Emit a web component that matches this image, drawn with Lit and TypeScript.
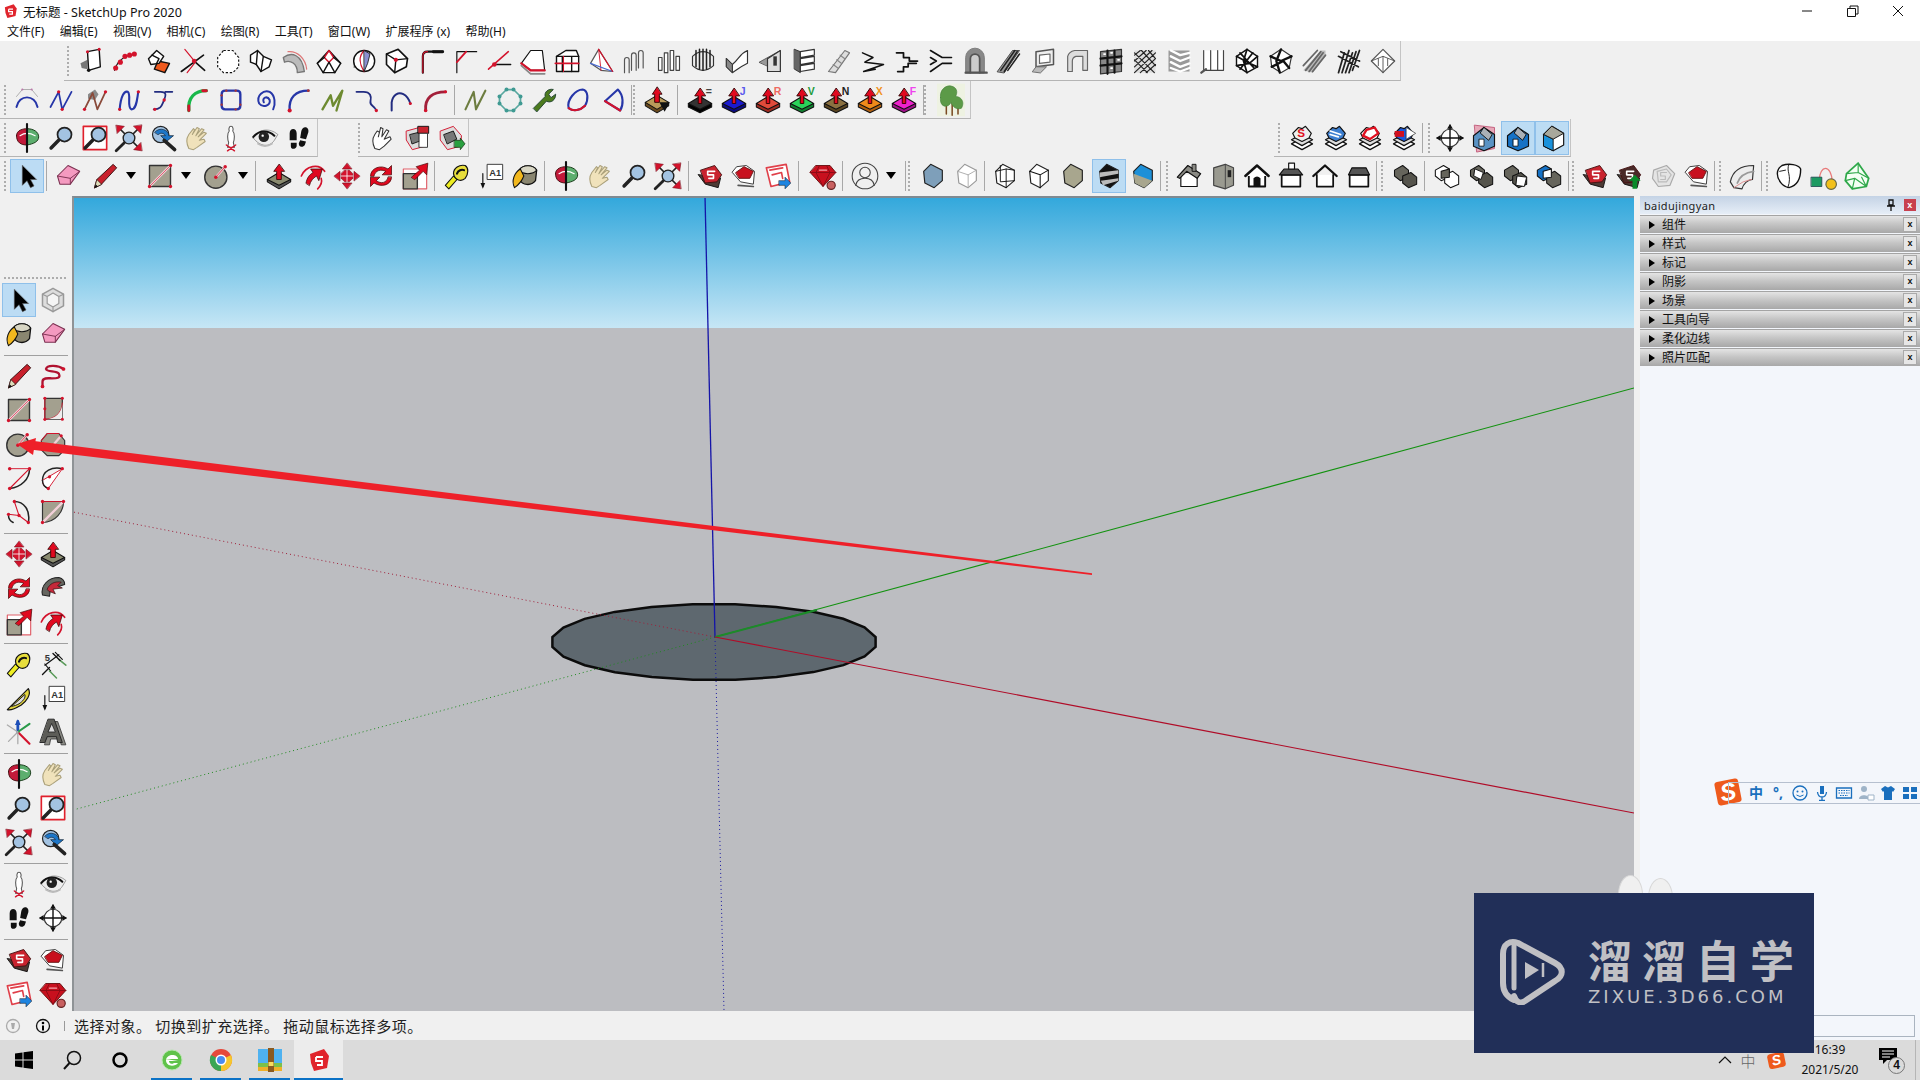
import { LitElement, html, css, svg } from 'lit';
import { customElement } from 'lit/decorators.js';

const RED = '#d3132c';
const BLUE = '#2636a8';

const p = (d: string, fill = 'none', stroke = '#111', w = 1.2) =>
  svg`<path d=${d} fill=${fill} stroke=${stroke} stroke-width=${w} stroke-linejoin="round" stroke-linecap="round"/>`;
const dots = (pts: number[][], r = 1.4, c = RED) => pts.map(([x, y]) => svg`<circle cx=${x} cy=${y} r=${r} fill=${c}/>`);
const label = (t: string, x: number, y: number, c: string, s = 8) =>
  svg`<text x=${x} y=${y} fill=${c} font-size=${s} font-weight="700" font-family="Liberation Sans, sans-serif">${t}</text>`;

// pushpull style block, optional hotkey letter
const push = (top: string, side: string, letter = '', lc = '#000') => [
  p('M2 15v3l10 5 10-5v-3', side, '#111', 0.9),
  p('M12 9 22 15 12 20 2 15z', top, '#111', 0.9),
  p('M12 2 7.5 8.5H10.500V15h3V8.500H16.500z', '#e0091f', '#300', 0.8),
  letter ? label(letter, 17, 8, lc, 9) : '',
];
const mag = (lens = '#a3c3e2') => [p('M10 14 3.500 20.500', 'none', '#222', 3), svg`<circle cx="15" cy="9" r="6" fill=${lens} stroke="#222" stroke-width="1.500"/>`];
const redTri = (d: string) => p(d, '#d3132c', '#7a0a18', 0.5);
const stack = (c: string, extra: unknown) => [
  p('M3 17 12 12 21 17 12 22z', '#fff', '#111', 1.1),
  p('M3 13.500 12 8.500 21 13.500 12 18.500z', '#ddd', '#111', 1.1),
  p('M4 8 9 3 12 4 15 2 20 8 18 12 12 15 6 12z', c, '#111', 1),
  extra,
];
const house = (body: string, roof: string, w = 1.1) => [
  p('M5 11v10h14V11', body, '#111', w),
  p('M2 12 12 3 22 12', roof, '#111', w + 0.5),
];
const houseBlue = (a: string, b: string) => [
  p('M12 3 21 9v10l-9 4-9-4v-9z', a, '#111', 1),
  p('M12 3 19 9 16 14 9 8z', '#aab0b6', '#111', 0.8),
  p('M8 13h4v6H8z', b, '#111', 0.7),
];
const hex = (fill: string, stroke = '#222') => p('M10 2 20 7 20 16 13 22 5 18 4 8z', fill, stroke, 1);
const su = (fill = '#c9232e', c = '#4d3a34') => [
  p('M2 11 8 19 19 22 21 14z', c, '#111', 0.8),
  p('M4 7 16 3 22 11 18 17 8 18z', fill, '#411', 0.8),
  p('M10 8h6M10 8v3h5v3h-4', 'none', '#fff', 1.400),
];
const gray2 = (a = '#66655c', b = '#55544c') => [
  p('M3 7 10 3 15 7 15 13 8 16 3 12z', a, '#111', 0.9),
  p('M10 12 17 9 22 13 22 19 15 22 10 18z', b, '#111', 0.9),
];
const wire2 = (mid: string, blue = false) => [
  p('M2 7 9 3 14 6 14 13 7 16 2 12z', blue ? '#1672c6' : '#fff', '#111', 0.9),
  p('M10 11 17 8 22 12 22 19 15 22 10 18z', mid, '#111', 0.9),
  p('M7 8 14 6 14 13 7 14z', blue ? '#fff' : '#66655c', '#111', 0.9),
];

const ICONS: Record<string, unknown> = {
  // row 1
  sheet: [p('M3 14 9 11v8l-5-1z', '#777', 'none'), p('M9 4 19 2 20 17 10 20z', '#fff'), dots([[9, 4], [19, 2]], 1.300), dots([[10, 20]], 1.500, '#111')],
  beads: [p('M3 20C5 13 9 10 13 8 15 7 18 7 21 6', 'none', '#222', 1), dots([[4, 18], [8, 13], [12, 8], [16, 7], [20, 6]], 2.200)],
  orange: [p('M11 12 21 14 17 22 8 19z', '#f05a1e'), p('M3 10 10 3 16 8 12 14 5 15z', '#fff'), p('M6 7 12 10 10 14')],
  snip: [p('M5 2 14 13 7 22', 'none', RED, 1), p('M2 21 21 7', 'none', '#111', 1.400), p('M14 13 22 20', 'none', '#111', 1.400), dots([[13, 12]], 2)],
  dash: [p('M4 17 9 11v10z', '#666', 'none'), svg`<path d="M9 3h8l5 6v8l-5 5H9l-5-5V9z" fill="#fff" stroke="#111" stroke-dasharray="2 1.500"/>`],
  sketch: [p('M3 7 9 3 14 8 21 11 19 17 12 21 8 15 3 13z', '#fff'), p('M9 3 8 15M14 8 12 21')],
  band: [p('M2 9C9 4 18 6 20 21L14 22C14 14 8 11 3 13z', '#bbb', '#777'), p('M6 4C14 3 21 10 22 19', 'none', '#d77', 1)],
  hip: [p('M12 3 22 14 17 22H7L2 14z', '#fff'), p('M8 9 12 3 16 9 12 13z', 'none', RED), p('M2 14 8 9M22 14 16 9M7 22 12 13 17 22')],
  ball: [p('M4 9 9 6v10l-5 2z', '#666', 'none'), svg`<circle cx="13" cy="12" r="9" fill="#fff" stroke="#111" stroke-width="1.200"/>`, p('M13 3C8 8 9 15 13 21', 'none', RED), p('M13 3 18 6 16 14 13 21z', '#8a8fd0', '#111', 0.7)],
  boxarrow: [p('M3 6 13 2 21 10 20 17 10 22 3 15z', '#fff', '#111', 1.400), p('M3 6 11 11 10 22M11 11 21 10'), dots([[11, 11]], 1.800)],
  cornerA: [p('M5 22V8Q5 4 9 4H22', 'none', '#111', 1.800), p('M5 22V8Q5 4 9 4', 'none', RED, 1), p('M14 4H22', 'none', '#111', 2.500)],
  cornerB: [p('M5 22V4H22', 'none', '#111', 1), p('M5 13 13 4', 'none', RED, 1.600)],
  angle: [p('M3 19 20 4', 'none', RED, 1.300), p('M8 15H22', 'none', '#111', 1.200), dots([[8, 15]], 2)],
  hexred: [p('M2 14 10 3 20 3 22 20 10 20z', '#fff', '#111', 1), p('M2 14 10 20H22', 'none', RED, 2), p('M2 16 10 23H22', 'none', '#888', 1.500)],
  frameR: [p('M3 8 11 3H20L22 8V21H3z', '#fff'), p('M3 8H22M8 8V21M16 8V21'), p('M2 14H22', 'none', RED, 1.500), p('M9 8V21', 'none', RED, 0.9)],
  prism: [p('M10 2 22 21 12 20 3 14z', '#fff', '#555', 1), p('M10 2 12 20', 'none', RED, 0.8), p('M3 14 22 21', 'none', '#4a6ad0', 1), p('M10 2 22 21', 'none', RED, 1)],
  pillars: [p('M3 22V11Q3 9 5 9T7 11V22M9 20V7Q9 5 11 5T13 7V20M15 18V5Q15 3 17 3T19 5V18', 'none', '#555', 1)],
  pillars2: [p('M3 20V9H6V20ZM8 22V5H11V22ZM13 20V3H16V20ZM18 20V8H21V20Z', '#fff', '#444', 1)],
  ribs: [p('M3 8Q12 0 21 8V16Q12 24 3 16z', '#eee', '#333', 1), p('M6 3V17M9 2V19M12 2V20M15 2V19M18 3V17', 'none', '#222', 1.300)],
  fold: [p('M3 10 8 15V22L3 17zM8 15C14 10 14 6 21 3V14C15 17 14 18 8 22z', '#fff', '#333', 1), p('M3 17 8 22V15L3 10z', '#888', '#333', 0.8)],
  wedge: [p('M2 13 20 3V21z', '#999', '#555', 0.8), p('M9 10 20 3V21H9z', '#ddd', '#333', 1), p('M14 8h3v8h-3z', '#333', 'none')],
  louvers: [p('M3 2 8 4V22L3 19z', '#666', '#333', 0.8), p('M8 4 20 2V7L8 9zM8 10 20 8V13L8 15zM8 16 20 14V19L8 21z', '#fff', '#333', 1)],
  ramp: [p('M3 21 17 3 21 5 9 22z', '#ddd', '#777', 1), p('M7 15 11 18M10 11 14 14M13 7 17 10', 'none', '#888', 1)],
  zig1: [p('M3 5 12 9 5 13 21 15 4 21 14 19', 'none', '#111', 1.300)],
  zig2: [p('M3 5H9V9H14V12H21M4 21H9V17H13V14H20', 'none', '#111', 1.500)],
  zig3: [p('M3 3 13 9H21M3 21 13 14H21M3 9 8 12 3 15', 'none', '#111', 1.400)],
  dome: [p('M4 22V9A8 8 0 0 1 20 9V22z', '#888', '#777', 0.8), p('M8 22V10A4 4 0 0 1 16 10V22', '#ccc', '#555', 1.500), p('M4 22H22', 'none', '#555', 2)],
  slash: [p('M2 21 15 3H21L8 22z', '#999', '#333', 0.7), p('M5 20 17 3M8 21 19 4M11 20 21 6', 'none', '#222', 1.300)],
  frame3: [p('M6 4 21 2V15L6 17z', '#eee', '#555', 1.300), p('M9 7 18 6V13L9 14z', '#fff', '#666', 1), p('M3 21 6 17H15L10 22z', '#bbb', '#666', 0.8)],
  arch: [p('M4 21V8Q5 4 10 3H21V20H17V8H11Q8 9 8 12V21z', '#ddd', '#666', 1)],
  grid: [p('M3 4 21 2V21L3 23z', '#888', '#333', 1), p('M9 3V23M15 3V22M3 10 21 8M3 16 21 14', 'none', '#111', 1.800), p('M6 6h1M12 5h1M18 11h1M12 18h1', 'none', '#fff', 1.500)],
  hatch: [p('M3 3H21V22H3z', '#ddd', 'none'), p('M3 7 8 3M3 12 13 3M3 17 18 3M3 22 21 5M8 22 21 10M13 22 21 15M3 5 20 22M3 11 14 22M9 3 21 16M15 3 21 10', 'none', '#222', 1)],
  chev: [p('M3 3H21V21H3z', '#999', 'none'), p('M5 3 13 7 21 5M5 8 13 12 21 9M5 13 13 17 21 14M5 18 13 21 21 18', 'none', '#fff', 2)],
  curtain: [p('M4 3V20H10V3M10 3V20H16V3M16 3V20H21V3', '#fff', '#444', 1), p('M2 22 6 19', 'none', '#555', 2)],
  swirl: [p('M12 2 21 8 21 17 12 22 3 16 3 8z', '#fff', '#111', 1.200), p('M3 8 14 14 21 8M12 2 9 12 12 22M3 16 14 14 21 17M6 5 18 18M17 5 6 19', 'none', '#111', 1.500)],
  swirl2: [p('M12 2 21 8 19 18 12 22 4 17 3 8z', '#fff', '#333', 1), p('M3 8 12 12 21 8M12 2 8 12 11 22M4 17 14 12 19 18', 'none', '#111', 2)],
  diag: [p('M2 20 17 3H21V8L10 22z', '#bbb', 'none'), p('M4 20 17 4M7 21 19 5M10 21 21 7M2 16 14 3', 'none', '#666', 1.500)],
  stripes: [p('M3 22 8 5M6 22 12 3M9 22 15 5M12 22 18 4M15 20 21 3M3 8 20 17M5 4 21 12', 'none', '#222', 1.500)],
  gemw: [p('M12 2 22 12 12 22 2 12z', '#fff', '#555', 1), p('M2 12 12 8 22 12M12 8V22M8 16V10M16 16V10', 'none', '#555', 0.8)],
  // row 2
  bez: [p('M3 9 8 3H16L21 9', 'none', '#aaa', 0.8), p('M3 18C5 7 19 7 21 18', 'none', BLUE, 1.700), dots([[8, 3], [16, 3]], 0.900, '#b7a')],
  zigB: [p('M3 18 10 5 13 20 21 5', 'none', BLUE, 1.500), dots([[13, 20], [10, 5]])],
  zigG: [p('M6 7 12 3 15 7 12 12 6 11z', '#8a8a8a', 'none'), p('M3 20 10 6 14 20 21 5', 'none', '#8a4a3a', 1.500), dots([[3, 20], [21, 5]])],
  nBlue: [p('M4 20C5 8 8 4 11 5 14 7 10 18 14 20 19 20 19 9 20 5', 'none', BLUE, 1.800), dots([[4, 20], [20, 5]])],
  sBlue: [p('M5 5H10C16 5 14 9 13 12 11 16 11 20 4 20M14 5H20M3 22', 'none', '#222c80', 1.500), dots([[5, 20], [13, 12]])],
  arcG: [p('M5 21C4 10 10 4 20 4', 'none', '#18b84a', 2.800), p('M5 21V17M20 4H17', 'none', RED, 2.500)],
  rrect: [p('M7 4H17Q20 4 20 7V17Q20 20 17 20H7Q4 20 4 17V7Q4 4 7 4z', 'none', BLUE, 2), dots([[4, 8], [8, 4], [20, 16], [16, 20], [4, 16], [16, 4]], 1, '#a33')],
  spiral: [p('M11 14C9 10 14 8 16 12 17 17 10 19 7 15 4 8 11 3 16 5 21 8 21 16 19 20', 'none', BLUE, 1.700)],
  arcB: [p('M4 21C3 10 9 4 20 4', 'none', BLUE, 2), dots([[4, 21]], 1.800), dots([[20, 4]], 1.200, '#a33')],
  zigO: [p('M3 20 10 8 12 17 20 4 15 21', 'none', '#6d8a30', 2)],
  step: [p('M3 5H9C15 5 16 9 15 13 14 17 18 16 20 21', 'none', '#222c80', 1.600), dots([[20, 21]], 1.400)],
  archN: [p('M4 21V14C5 7 10 5 14 7 18 9 19 12 20 15', 'none', '#222c80', 1.700), dots([[20, 15]], 1.300)],
  archR: [p('M4 21C3 10 10 5 21 5', 'none', '#a3203a', 2.400), dots([[4, 21]], 1.500), dots([[21, 5]], 1.300)],
  zigOl: [p('M3 20 10 5 12 20 20 4', 'none', '#6d7d40', 1.800)],
  octo: [p('M9 3H15L21 9V15L15 21H9L3 15V9z', 'none', '#5aa8a0', 1.500), dots([[9, 3], [15, 3], [21, 9], [21, 15], [15, 21], [9, 21], [3, 15], [3, 9]], 1.700, '#3f9a92')],
  wrench: [p('M3 19 13 9C12 5 16 2 20 3L16 7 18 10 22 7C22 12 18 15 14 13L6 22z', '#4c7a1e', '#243', 0.8)],
  blob: [p('M4 19C2 12 10 3 16 3 21 4 21 12 18 17 14 21 8 22 4 19z', 'none', BLUE, 1.800), p('M4 19C8 22 14 21 18 17', 'none', RED, 1.800)],
  dtri: [p('M6 13 17 3C22 8 22 16 19 21z', 'none', BLUE, 1.800), p('M6 13 19 21', 'none', RED, 1.800)],
  pushW: [p('M2 14v3l10 6 10-6v-3', '#6a4a1e', '#111', 0.9), p('M12 8 22 14 12 20 2 14z', '#b99a5a', '#111', 0.9), p('M12 1 8 7H10V14H14V7H16z', '#e0091f', '#300', 0.8), p('M14 14H23L18.500 22z', '#111', 'none')],
  pushK: push('#333', '#000', '=', '#444'),
  pushJ: push('#1a1ad0', '#0a0a80', 'J', '#5a5aee'),
  pushR: push('#e04a3a', '#a02a20', 'R', '#ee6a60'),
  pushV: push('#2ad45a', '#108030', 'V', '#1c9a3c'),
  pushN: push('#8a7040', '#5a4520', 'N', '#222'),
  pushX: push('#f08a1a', '#b06010', 'X', '#f09020'),
  pushF: push('#ee22cc', '#a0108a', 'F', '#ee44ee'),
  tree: [p('M0 -2H24V26H0z', '#eef2e2', 'none'), p('M8 24V12M13 25V13M18 24V14', 'none', '#7a4a22', 1.300), p('M3 10C2 3 8 -1 12 0 17 1 18 5 16 9 21 9 24 14 21 19 16 21 13 17 12 14 10 19 2 19 3 10z', '#5c9a48', '#3f7d35', 0.5)],
  // row 3 and navigation
  orbit: [p('M3 10C3 5 9 4 12 4V18C7 18 3 16 3 10z', '#c21a3a', '#411', 0.8), p('M12 4C18 4 22 7 22 11 22 15 18 17 12 18z', '#5cae6e', '#131', 0.8), p('M6 10Q12 6 19 10', 'none', '#fff', 1), p('M12 0V24', 'none', '#111', 1.800)],
  zoom: mag(),
  zoomw: [p('M2 2H22V22H2z', '#fff', '#e0202c', 1.400), mag()],
  extents: [p('M3 21 9 15M15 15 21 21M9 9 3 3M15 9 21 3', 'none', '#222', 1.500), svg`<circle cx="12" cy="12" r="5" fill="#a3c3e2" stroke="#222" stroke-width="1.200"/>`, redTri('M1 1 8 2 2 8zM23 1 22 8 16 2zM23 23 16 22 22 16z'), p('M1 23 8 16', 'none', '#222', 2.400)],
  prev: [svg`<circle cx="10" cy="9" r="7" fill="#a3c3e2" stroke="#222"/>`, p('M5 7C9 2 17 5 17 10H21L15 15 10 10H14C13 8 10 7 8 9z', '#1d76c8', '#123', 0.6), p('M13 14 22 22', 'none', '#222', 3)],
  hand: [p('M5 21C2 15 3 12 5 9L9 4 10 5 8 9 12 3 14 4 11 10 16 4 18 5 13 11 18 7 20 8 14 14 18 13 19 15 12 20 9 22z', '#f0e2bb', '#aaa07a', 0.9)],
  walk: [p('M12 2C10 2 10 5 10.500 6 8.500 8 9 13 10 16L9 20H15L14 16C15 13 15.500 8 13.500 6 14 5 14 2 12 2z', '#fff', '#555', 0.9), p('M8 18 15 23M16 18 9 23', 'none', RED, 1.200)],
  eye: [p('M2 12C6 4 16 3 23 9L20 14C16 20 8 20 2 12z', '#eee', '#777', 0.6), p('M2 11C7 5 15 5 20 10', 'none', '#111', 1.800), svg`<circle cx="11" cy="11" r="4.500" fill="#222"/>`, dots([[10, 10]], 1, '#fff'), p('M6 17Q12 21 18 17', 'none', '#bbb', 1.500)],
  steps: [p('M4 8C4 3 10 3 10 8L10 14H4zM5 16H10V19C9 22 5 22 5 19z', '#111', 'none'), p('M14 6C15 1 21 2 20 7L18 13 13 12zM13 14 18 15 17 18C15 21 11 19 12 16z', '#111', 'none')],
  handO: [p('M5 21C2 15 3 12 5 9L7 6 9 7 8 11 10 3 12 4 11 11 15 5 17 6 13 13 18 11 19 13 13 19 9 22z', '#fff', '#333', 0.9)],
  sectA: [p('M3 6 14 3 20 12 19 19 8 22 3 14z', '#ddd', RED, 0.8), p('M6 9 14 7 16 14 8 17z', '#777', '#111', 0.8), p('M13 2H22V8H13z', '#c9232e', '#111', 0.8), p('M14 8H21V20H14z', '#fff', '#333', 0.8)],
  sectB: [p('M3 6 14 2 21 10 20 19 9 22 3 14z', '#ddd', RED, 0.8), p('M6 9 14 6 17 13 9 17z', '#777', '#111', 0.8), p('M15 14H20V12L24 17 20 22V20H15z', '#2aa040', '#131', 0.6)],
  stackS: stack('#eee', label('S', 8, 11, '#e01020', 10)),
  stackB: stack('#3d7fd0', p('M7 6 16 9M7 9 14 11', 'none', '#fff', 1.500)),
  stackR: stack('#fff', p('M9 5 16 3 19 8 12 13 6 10z', 'none', '#e01020', 2)),
  stackG: stack('#1a5ae0', [p('M4 6H12V11H4z', '#d01020', 'none'), p('M14 3 22 8 14 13z', '#fff', '#333', 0.6)]),
  target: [svg`<circle cx="12" cy="12" r="7.500" fill="#fff" stroke="#333"/>`, p('M1 12H23M12 1V23', 'none', '#111', 1.200), p('M12 0 9.500 4H14.500zM24 12 20 9.500V14.500zM0 12 4 9.500V14.500zM12 24 9.500 20H14.500z', '#111', 'none')],
  housePlane: [p('M4 1 21 3V21L6 24z', '#e7a8b8', '#c25a7a', 0.8), houseBlue('#5a93c4', '#fff')],
  houseA: houseBlue('#1672c6', '#fff'),
  houseB: [p('M12 2 22 8V18L13 23 5 19V9z', '#fff', '#111', 1), p('M5 9 13 13V23L5 19z', '#1a92dc', '#111', 0.8), p('M12 2 22 8 13 13 5 9z', '#a8a89c', '#111', 0.8)],
  // row 4
  select: [p('M8 3V20L12 16 15 22 18 20.500 15 15H20z', '#000', '#555', 0.5)],
  eraser: [p('M3 12 12 3 22 8 14 19 5 19z', '#f49ac0', '#7a3050', 0.9), p('M3 12 14 14 22 8M14 14V19', 'none', '#7a3050', 0.8)],
  pencil: [p('M3 22 5 15 19 2 22 5 9 19z', '#c8202c', '#311', 0.8), p('M3 22 5 15 9 19z', '#ddb', '#311', 0.6), p('M3 22 4 19 6 21z', '#111', 'none')],
  rect: [p('M3 3H21V21H3z', '#a3a08f', '#333', 1.200), p('M4 20 20 4', 'none', '#f2d0d8', 2), p('M4 20 20 4', 'none', RED, 0.5), dots([[3, 21], [21, 3], [21, 21]], 1.400)],
  arcRect: [p('M3 3C20 3 21 10 21 21L3 21z', '#a3a08f', '#333', 1), p('M4 20 20 4', 'none', '#f2d0d8', 2), dots([[3, 3], [21, 21], [3, 21]], 1.400)],
  rotRect: [p('M5 2H20V20H5z', '#a3a08f', '#333', 1), p('M5 2 5 21M5 20C14 20 20 14 20 6', 'none', RED, 0.8), p('M5 20C14 20 20 14 20 6L20 20z', '#eee', 'none'), dots([[5, 2], [20, 2], [20, 20], [5, 20], [5, 11]], 1.300)],
  circle: [svg`<circle cx="11" cy="13" r="9.500" fill="#a3a08f" stroke="#333" stroke-width="1.200"/>`, p('M11 13 19 4', 'none', '#f2d0d8', 2), p('M11 13 19 4', 'none', RED, 0.6), dots([[11, 13], [19, 4]], 1.500)],
  poly: [p('M7 3H17L22 9V17L17 22H7L2 17V9z', '#a3a08f', '#333', 1), p('M2 9 7 3H17', 'none', RED, 0.9), p('M12 13 19 5', 'none', '#f2d0d8', 2), dots([[12, 13], [19, 5]], 1.400)],
  arc1: [p('M4 4H21', 'none', RED, 0.8), p('M21 4C21 13 14 20 4 21', 'none', '#222', 1.300), p('M4 21 21 4', 'none', RED, 1), dots([[4, 4], [21, 4], [4, 21]], 1.500)],
  arc2: [p('M3 14C3 6 11 2 20 4', 'none', '#222', 1.200), p('M3 14 20 4 8 21C4 20 3 17 3 14z', '#fff', RED, 0.8), p('M3 14C3 18 5 20 8 21', 'none', '#222', 1.200), dots([[20, 4], [8, 21], [9, 11]], 1.400)],
  arc3: [p('M8 3C16 3 22 10 20 21', 'none', '#222', 1.300), p('M3 15C3 18 5 20 7 21', 'none', '#222', 1.300), p('M8 3 12 15 20 21M3 14 12 15', 'none', RED, 0.9), dots([[8, 3], [3, 14], [12, 15], [20, 21]], 1.400)],
  pie: [p('M3 3H21C21 12 14 21 3 21z', '#a3a08f', '#333', 1), p('M4 20 20 4', 'none', '#f2d0d8', 2), p('M3 3H21', 'none', RED, 0.8), dots([[3, 3], [21, 3], [3, 21]], 1.400)],
  freehand: [p('M3 21V17C3 13 9 14 11 14 15 14 19 14 17 10 15 7 7 9 6 6 7 2 17 3 21 6', 'none', '#b01230', 2), dots([[3, 21], [21, 6]], 1.600)],
  pushpull: [p('M2 15v2l10 6 10-6v-2', '#555', '#111', 0.9), p('M12 9 22 15 12 20 2 15z', '#8a8b70', '#111', 0.9), p('M12 2 7.500 8H10V15H14V8H16.500z', '#e0091f', '#300', 0.7)],
  follow: [p('M2 12C6 3 17 1 22 8', 'none', RED, 1.400), p('M19 14C20 17 19 20 16 23', 'none', RED, 1.400), p('M6 18C7 13 9 11 12 9L10 6H20L17 16 15 12C12 14 10 16 9 20z', '#e0091f', '#300', 0.6)],
  move: [redTri('M12 1 8 6H16zM12 23 8 18H16zM1 12 6 8V16zM23 12 18 8V16z'), redTri('M10 7 14 7 17 10 17 14 14 17 10 17 7 14 7 10z'), p('M12 7V17M7 12H17', 'none', '#fff', 0.7)],
  rotate: [p('M3 12C3 5 12 2 18 6L21 3V11H13L16 8C12 6 7 7 6 12z', '#e0091f', '#400', 0.6), p('M21 13C21 20 12 22 6 18L3 21V13H11L8 16C12 19 17 18 18 13z', '#e0091f', '#400', 0.6)],
  scale: [p('M2 6H22V23H2z', '#fff', '#e0606a', 1), p('M2 10H14V23H2z', '#a3a08f', '#333', 1.200), p('M9 13 16 7 13 4 23 1 22 11 19 8 12 15z', '#e0091f', '#400', 0.6)],
  offset: [p('M3 18C1 10 8 3 17 3 21 4 22 7 22 9L16 11C11 11 9 14 9 19z', '#666660', '#222', 0.9), p('M7 13C9 8 14 6 19 7L16 10 20 12 12 13 14 17 9 15z', '#c4283a', '#311', 0.6)],
  tape: [p('M2 20 9 12 12 15 5 23z', '#ee2', '#111', 0.9), p('M9 10C9 5 14 2 19 3 22 5 22 10 19 14 16 17 10 16 9 10z', '#e8de3c', '#111', 1), p('M12 10C13 7 16 6 18 7', 'none', '#111', 1.800)],
  dim: [p('M5 13 17 4M5 12 10 18M14 2 20 8', 'none', '#111', 1), p('M17 8 23 13M9 18 15 24', 'none', '#5a9a5a', 1.300), p('M3 21 9 15M12 3 18 9', 'none', '#111', 1.200), label('5', 5, 9, '#333', 8)],
  prot: [p('M2 22 20 4C23 9 18 15 14 18 9 21 5 23 2 22z', '#e4d640', '#111', 1), p('M6 19 17 9C18 12 15 15 12 17 10 18 8 19 6 19z', '#ddd', '#111', 0.8)],
  textA: [p('M9 2H22V15H9z', '#fff', '#333', 0.8), label('A1', 10.500, 12, '#333', 8), p('M5 10V21', 'none', '#111', 1), p('M3 18H7L5 23z', '#111', 'none')],
  axes: [p('M11 12V3', 'none', '#1d4fb8', 2.400), p('M11 1 8.500 6H13.500z', '#1d4fb8', 'none'), p('M11 12 21 22', 'none', '#d3132c', 1.800), p('M11 12 21 5', 'none', '#2a9a4a', 1.800), p('M11 12 2 6M11 12 3 20M11 12V22', 'none', '#aaa', 1.100)],
  text3d: [p('M12 3H16L23 23H19L18 18H10L9 23H5z', '#8a8a84', '#333', 0.7), p('M8 1H13L20 21H16L15 16H7L5 21H1z', '#5d5d58', '#222', 0.8), p('M8 12H14L11 5z', '#ddd', '#222', 0.7)],
  paint: [p('M7 7C10 2 19 2 22 7L21 16C17 21 10 20 7 15z', '#8a8670', '#111', 1.100), p('M7 7C10 2 19 2 22 7 19 11 10 11 7 7z', '#d8d6c4', '#111', 0.9), p('M8 6C3 9 0 16 3 22 6 20 9 17 11 12z', '#f2b81e', '#111', 0.9)],
  component: [p('M3 7 12 2 21 7V17L12 22 3 17z', '#ddd', '#999', 1.300), p('M7 9 12 6 17 9V15L12 18 7 15zM3 7 7 9M21 7 17 9M12 22V18', '#f5f5f5', '#999', 1)],
  ruby: [p('M6 3H18L23 9 12 21 1 9z', '#c8101e', '#611', 0.8), p('M1 9H23M9 3 6 9 12 21 18 9 15 3', 'none', '#8a0c16', 0.8), p('M9 7H15', 'none', '#f4a0a8', 1.200), svg`<circle cx="19" cy="20" r="3.500" fill="#c86060" stroke="#622"/>`],
  su1: su(),
  su2: [p('M2 9 9 17 20 19 21 8 14 3 6 4z', '#fff', '#333', 0.8), p('M5 9 12 4 20 8 17 14 8 14z', '#c8101e', '#611', 0.8), p('M7 20 20 21', 'none', '#555', 1.500)],
  su3: [p('M2 5 19 2 22 17 6 21z', '#fff', '#e0404a', 1.400), p('M5 7 16 5M7 11 15 9 16 14', 'none', '#e0404a', 1.400), p('M13 16H18V13L23 18 18 23V20H13z', '#1d84e0', '#123', 0.5)],
  suUp: [su('#4a2a28'), p('M15 16H12L17 11 22 16H19V23H15z', '#0a8a2a', 'none')],
  suGray: [p('M4 7 15 3 22 10 18 20 8 21 3 14z', '#e4e4e4', '#aaa', 1), p('M7 8 15 6 19 11 15 17 8 17zM10 9H15M10 9V12H14V15H10', 'none', '#bbb', 1)],
  user: [svg`<circle cx="12" cy="12" r="11" fill="none" stroke="#444" stroke-width=".9"/><circle cx="12" cy="9" r="4.500" fill="none" stroke="#444" stroke-width=".9"/>`, p('M4 20C5 15 8 14 12 14S19 15 20 20', 'none', '#444', 0.9)],
  xray: hex('#7e9fba'),
  wire: [hex('#fff', '#999'), p('M4 8 13 11 13 22M13 11 20 7', 'none', '#aaa', 0.8)],
  wire3: [hex('#fff'), p('M4 8 13 6 20 7M13 6 13 22M8 3 8 17 20 16', 'none', '#111', 0.8)],
  line: [hex('#fff'), p('M4 8 13 11 13 22M13 11 20 7', 'none', '#111', 0.9)],
  shaded: hex('#a8a68e'),
  mono: [hex('#111'), p('M4 9 20 7V10L4 13zM5 16 20 14V16L7 20z', '#bbb', 'none')],
  tex: [hex('#1d90d8'), p('M4 10 20 16 13 22 5 18z', '#a8a68e', 'none')],
  h1: [p('M5 11V21H19V11', '#fff', '#111', 1), p('M2 13 11 3 22 10 19 14 10 8 4 14z', '#8a8a84', '#111', 1), p('M15 2H18V8H15z', '#8a8a84', '#111', 0.8)],
  h2: [p('M4 5 14 2 21 5V20L14 23 4 20z', '#9a9a90', '#444', 1), p('M14 2V23', 'none', '#444', 0.8), p('M16 7H19V13H16z', '#222', 'none')],
  h3: [house('#fff', '#fff', 1.600), p('M9 21V14Q12 11 15 14V21z', '#111', 'none')],
  h4: [p('M4 11H20V21H4z', '#fff', '#111', 1.500), p('M2 11 6 6H18L22 11z', '#555', '#111', 1), p('M10 1H15V6H10z', '#fff', '#111', 1)],
  h5: house('#fff', 'none', 1.500),
  h6: [p('M4 11H20V21H4z', '#fff', '#111', 1.500), p('M3 11 6 5H18L21 11z', '#555', '#111', 1)],
  g1: gray2(),
  w1: wire2('#fff'),
  w2: [gray2(), p('M7 6 14 9 12 15 6 12z', '#fff', '#111', 0.8)],
  w3: [gray2(), p('M14 12 22 13 20 21 13 20z', '#fff', '#111', 0.8)],
  w4: wire2('#66655c', true),
  loft: [p('M2 17C4 7 12 3 22 3L21 15C17 15 13 19 12 23L5 22z', '#ececec', '#333', 1), p('M8 18C10 12 15 9 22 8', 'none', '#999', 1.500), p('M5 22 13 17 20 15', 'none', '#e08a8a', 0.8)],
  rock: [p('M6 3C12 1 20 2 22 6 22 13 20 20 12 22 6 21 2 15 2 10 2 7 3 5 6 3z', '#fff', '#111', 1.200), p('M12 2C9 8 15 11 11 22M4 8 9 7', 'none', '#111', 0.8)],
  nodes: [p('M9 15C9 3 19 1 20 17', 'none', '#e87a7a', 1), p('M2 13H11V21H2z', '#1d9a62', '#134', 0.6), svg`<circle cx="19" cy="19" r="4.500" fill="#f2c01a" stroke="#664"/>`],
  gemG: [p('M13 1 22 14 20 21 8 23 2 16 3 10z', '#f4fff4', '#2fa84a', 1.500), p('M3 10 13 9 13 1M13 9 22 14M2 16 10 14 8 23M10 14 20 21 16 13', 'none', '#2fa84a', 1)],
};

const ROW1: unknown[] = [3, ':', 5, 'sheet', 'beads', 'orange', 'snip', 'dash', 'sketch', 'band', 'hip', 'ball', 'boxarrow', 'cornerA', 'cornerB', 'angle', 'hexred', 'frameR', 'prism', 'pillars', 'pillars2', 'ribs', 'fold', 'wedge', 'louvers', 'ramp', 'zig1', 'zig2', 'zig3', 'dome', 'slash', 'frame3', 'arch', 'grid', 'hatch', 'chev', 'curtain', 'swirl', 'swirl2', 'diag', 'stripes', 'gemw'];
const ROW2: unknown[] = [4, ':', 4, 'bez', 'zigB', 'zigG', 'nBlue', 'sBlue', 'arcG', 'rrect', 'spiral', 'arcB', 'zigO', 'step', 'archN', 'archR', 2, '|', 4, 'zigOl', 'octo', 'wrench', 'blob', 'dtri', 2, '|', 1, ':', 5, 'pushW', 3, '|', 5, 'pushK', 'pushJ', 'pushR', 'pushV', 'pushN', 'pushX', 'pushF', 2, '|', 0, ':', 8, 'tree', 2];
const ROW3A: unknown[] = [4, ':', 4, 'orbit', 'zoom', 'zoomw', 'extents', 'prev', 'hand', 'walk', 'eye', 'steps', 1];
const ROW3B: unknown[] = [':', 6, 'handO', 'sectA', 'sectB'];
const ROW3C: unknown[] = [4, ':', 5, 'stackS', 'stackB', 'stackR', 'stackG', 1, '|', 5, ':', 3, 'target', 'housePlane', '*houseA', '*houseB', 1];
const ROW4: unknown[] = [4, ':', 4, '*select', 2, '|', 4, 'eraser', 3, 'pencil', 'v', 1, 2, 'rect', 'v', 2, 3, 'circle', 'v', 3, '|', 6, 'pushpull', 'follow', 'move', 'rotate', 'scale', 2, '|', 5, 'tape', 'textA', 'paint', 2, '|', 4, 'orbit', 'hand', 'zoom', 'extents', 3, '|', 4, 'su1', 'su2', 'su3', 3, '|', 7, 'ruby', 2, '|', 5, 'user', 'v', 5, '|', 2, ':', 6, 'xray', 'wire', '|', 3, 'wire3', 'line', 'shaded', 2, '*mono', 'tex', '|', 5, ':', 4, 'h1', 'h2', 'h3', 'h4', 'h5', 'h6', '|', 4, ':', 5, 'g1', 2, '|', 5, 'w1', 'w2', 'w3', 'w4', 2, '|', 3, ':', 4, 'su1', 'suUp', 'suGray', 'su2', '|', 4, ':', 4, 'loft', 2, '|', 4, ':', 4, 'rock', 'nodes', 'gemG'];

const LEFT: string[][] = [
  ['*select', 'component', 'paint', 'eraser'],
  ['pencil', 'freehand', 'rect', 'rotRect', 'circle', 'poly', 'arc1', 'arc2', 'arc3', 'pie'],
  ['move', 'pushpull', 'rotate', 'offset', 'scale', 'follow'],
  ['tape', 'dim', 'prot', 'textA', 'axes', 'text3d'],
  ['orbit', 'hand', 'zoom', 'zoomw', 'extents', 'prev'],
  ['walk', 'eye', 'steps', 'target'],
  ['su1', 'su2', 'su3', 'ruby'],
];

const MENUS = ['文件(F)', '编辑(E)', '视图(V)', '相机(C)', '绘图(R)', '工具(T)', '窗口(W)', '扩展程序 (x)', '帮助(H)'];
const TRAYS = ['组件', '样式', '标记', '阴影', '场景', '工具向导', '柔化边线', '照片匹配'];

// 24 sided disc, the circle the user just drew
const DISC = Array.from({ length: 24 }, (_, i) => {
  const a = (i / 24) * Math.PI * 2 + 0.13;
  return `${(714 + 163 * Math.cos(a)).toFixed(1)},${(642 + 38 * Math.sin(a)).toFixed(1)}`;
}).join(' ');

@customElement('app-root')
export class AppRoot extends LitElement {
  static styles = css`
    :host {
      display: block;
      position: relative;
      width: 1920px;
      height: 1080px;
      overflow: hidden;
      background: #f0f0f0;
      font-family: 'Noto Sans', 'Noto Sans CJK SC', sans-serif;
      font-size: 12px;
      color: #111;
    }
    .title {
      height: 22px;
      background: #fff;
      display: flex;
      align-items: center;
      padding-left: 3px;
      gap: 5px;
      font-size: 12.5px;
    }
    .title .logo {
      width: 15px;
      height: 16px;
    }
    .winbtns {
      margin-left: auto;
      display: flex;
    }
    .winbtns svg {
      width: 45px;
      height: 20px;
    }
    .menu {
      height: 19px;
      background: #fff;
      display: flex;
      gap: 15.3px;
      padding-left: 7px;
      align-items: center;
      line-height: 19px;
    }
    .row {
      display: flex;
      height: 38px;
    }
    .row.first {
      height: 40px;
      padding-left: 64px;
    }
    .row.last {
      height: 39px;
    }
    .section {
      display: flex;
      align-items: center;
      height: 100%;
      box-sizing: border-box;
      border-bottom: 1px solid #b4b4b4;
      border-right: 1px solid #c4c4c4;
    }
    .row.last .section {
      border-bottom: none;
      border-right: none;
      padding-bottom: 2px;
    }
    .cell {
      width: 34px;
      height: 34px;
      flex: none;
      display: flex;
      align-items: center;
      justify-content: center;
      box-sizing: border-box;
    }
    .cell svg {
      width: 28px;
      height: 28px;
      overflow: visible;
    }
    .cell.on {
      background: #bcdcf4;
      border: 1px solid #8fc0ea;
    }
    .drop {
      width: 18px;
      flex: none;
      display: flex;
      justify-content: center;
    }
    .drop::before {
      content: '';
      border: 5px solid transparent;
      border-top: 7px solid #000;
      border-bottom: none;
    }
    .sp {
      flex: none;
      display: block;
    }
    .div {
      width: 1px;
      height: 30px;
      flex: none;
      background: #a8a8a8;
    }
    .grip {
      width: 2px;
      height: 30px;
      flex: none;
      background: repeating-linear-gradient(#adadad 0 2px, transparent 2px 4px);
    }
    .main {
      display: flex;
      height: 815px;
    }
    .ltool {
      width: 72px;
      flex: none;
      display: flex;
      flex-direction: column;
      justify-content: flex-end;
      box-sizing: border-box;
      padding-left: 2px;
    }
    .lgrip {
      height: 2px;
      margin: 0 6px 4px 2px;
      background: repeating-linear-gradient(90deg, #adadad 0 2px, transparent 2px 4px);
    }
    .lgroup {
      display: grid;
      grid-template-columns: 34px 34px;
    }
    .lsep {
      height: 8px;
      display: flex;
      align-items: center;
      padding: 0 2px;
    }
    .lsep::before {
      content: '';
      width: 64px;
      height: 1px;
      background: #a0a0a0;
    }
    .canvas {
      position: relative;
      flex: 1;
      display: flex;
      flex-direction: column;
      border-top: 2px solid #7f8a92;
      border-left: 2px solid #8f9396;
    }
    .sky {
      height: 130px;
      background: linear-gradient(#33a8dc, #c6e6f5);
    }
    .ground {
      flex: 1;
      background: #bcbdc1;
    }
    .scene {
      position: absolute;
      inset: 0;
      width: 100%;
      height: 100%;
    }
    .panel {
      width: 286px;
      flex: none;
      display: flex;
    }
    .strip {
      width: 6px;
      background: #f0f0f0;
    }
    .tray {
      flex: 1;
      background: #f3f6fb;
      display: flex;
      flex-direction: column;
    }
    .tray-head {
      height: 18px;
      display: flex;
      align-items: center;
      padding: 0 4px;
      background: linear-gradient(#c4d3e5, #e6eef7);
      font-size: 11px;
      letter-spacing: 0.35px;
      color: #222;
    }
    .tray-head svg {
      margin-left: auto;
      width: 10px;
      height: 12px;
      margin-right: 8px;
    }
    .tray-x {
      width: 12px;
      height: 12px;
      background: #c8414f;
      color: #fff;
      font: 700 9px/12px 'Liberation Sans', sans-serif;
      text-align: center;
    }
    .tray-row {
      height: 18px;
      margin-top: 1px;
      display: flex;
      align-items: center;
      background: linear-gradient(#e4e4e4, #c6c6c6 45%, #a8a8a8);
      border-top: 1px solid #a4a4a4;
      box-sizing: border-box;
    }
    .tray-row::before {
      content: '';
      margin: 0 7px 0 9px;
      border: 4px solid transparent;
      border-left: 6px solid #000;
      border-right: none;
    }
    .tray-row span {
      font-size: 12px;
      line-height: 16px;
    }
    .tray-row b {
      margin-left: auto;
      margin-right: 3px;
      width: 12px;
      height: 13px;
      background: #e6e6e6;
      border: 1px solid #aaa;
      font: 700 9px/12px 'Liberation Sans', sans-serif;
      text-align: center;
    }
    .status {
      height: 29px;
      display: flex;
      align-items: center;
      background: #f0f0f0;
    }
    .status svg {
      width: 16px;
      height: 16px;
      flex: none;
    }
    .status-text {
      margin-left: 9px;
      font-size: 15px;
      letter-spacing: 0.5px;
      font-family: 'Noto Sans CJK SC', sans-serif;
      color: #222;
    }
    .status .bar {
      width: 1px;
      height: 10px;
      background: #999;
      margin-left: 13px;
    }
    .status-end {
      margin-left: auto;
      width: 280px;
      height: 100%;
      background: #f3f6fb;
      display: flex;
      align-items: center;
      justify-content: flex-end;
      padding-right: 5px;
      box-sizing: border-box;
    }
    .status-box {
      width: 260px;
      height: 22px;
      box-sizing: border-box;
      border: 1px solid #aab4c0;
    }
    .taskbar {
      height: 40px;
      display: flex;
      align-items: center;
      background: #dbdbdb;
    }
    .task {
      width: 48px;
      height: 40px;
      display: flex;
      align-items: center;
      justify-content: center;
      box-sizing: border-box;
      flex: none;
    }
    .task svg {
      width: 24px;
      height: 24px;
    }
    .task.app {
      width: 49px;
      position: relative;
    }
    .task.app::after {
      content: '';
      position: absolute;
      left: 4px;
      right: 4px;
      bottom: 0;
      height: 2px;
      background: #0b72c6;
    }
    .task.cur {
      background: #ececec;
    }
    .task.cur::after {
      left: 0;
      right: 0;
    }
    .tasktray {
      margin-left: auto;
      display: flex;
      align-items: center;
      height: 100%;
    }
    .tasktray > svg {
      flex: none;
    }
    .clock {
      width: 62px;
      text-align: center;
      font-size: 12px;
      line-height: 20px;
      margin: 0 10px 0 14px;
      color: #111;
    }
    .note {
      position: relative;
      width: 38px;
      height: 40px;
      margin-right: 6px;
    }
    .note svg {
      position: absolute;
      left: 8px;
      top: 8px;
      width: 18px;
      height: 16px;
    }
    .note span {
      position: absolute;
      left: 17px;
      top: 17px;
      width: 15px;
      height: 15px;
      border: 1px solid #777;
      border-radius: 50%;
      font: 700 12px/15px 'Liberation Sans', sans-serif;
      text-align: center;
      background: #dbdbdb;
    }
    .task-end {
      width: 1px;
      height: 40px;
      margin-right: 4px;
      background: #b5b5b5;
    }
    .ts {
      width: 17px;
      height: 15px;
      display: inline-block;
      background: #ee5a1c;
      border-radius: 3px;
      transform: rotate(-12deg);
      color: #fff;
      font: italic 900 14px/15px 'Liberation Sans', sans-serif;
      text-align: center;
    }
    .trayime {
      width: 22px;
      color: #666;
      font-size: 15px;
      text-align: center;
      margin-right: 9px;
      font-family: 'Noto Sans CJK SC', sans-serif;
      font-weight: 300;
    }
    .arrow {
      position: absolute;
      inset: 0;
      width: 1920px;
      height: 1080px;
      pointer-events: none;
    }
    .ime {
      position: absolute;
      left: 1728px;
      top: 782px;
      width: 192px;
      height: 22px;
      box-sizing: border-box;
      border: 1px solid #b6c0cf;
      border-right: none;
      display: flex;
      align-items: center;
      padding-left: 16px;
      color: #1a6fbd;
    }
    .ime > span,
    .ime > svg {
      width: 22px;
      height: 16px;
      flex: none;
      text-align: center;
      line-height: 16px;
      font-weight: 700;
      font-size: 14px;
    }
    .ime-logo {
      position: absolute;
      left: 1716px;
      top: 780px;
      width: 24px;
      height: 24px;
      background: #ee5a1c;
      border-radius: 3px;
      transform: rotate(-11deg);
      color: #fff;
      font: italic 900 24px/24px 'Liberation Sans', sans-serif;
      text-align: center;
    }
    .ear {
      position: absolute;
      top: 875px;
      width: 25px;
      height: 40px;
      border-radius: 50%;
      background: #f0f0f0;
      border: 1px solid #d8d8d8;
      box-sizing: border-box;
    }
    .mark {
      position: absolute;
      left: 1474px;
      top: 893px;
      width: 340px;
      height: 160px;
      background: #212f58;
      display: flex;
      align-items: center;
      box-sizing: border-box;
      padding: 0 0 3px 26px;
      color: #c0c0c4;
    }
    .mark svg {
      width: 65px;
      height: 67px;
      flex: none;
    }
    .mark-text {
      margin-left: 23px;
    }
    .mark-cn {
      font: 700 44px/44px 'Noto Sans CJK SC', sans-serif;
      letter-spacing: 10px;
      white-space: nowrap;
    }
    .mark-en {
      font: 400 18px/20px 'DejaVu Sans', sans-serif;
      letter-spacing: 3px;
      white-space: nowrap;
      margin-top: 6px;
    }
  `;

  private icon(name: string) {
    return svg`<svg viewBox="0 0 24 24" aria-hidden="true">${ICONS[name]}</svg>`;
  }

  private cell(name: string) {
    const on = name.startsWith('*');
    const key = on ? name.slice(1) : name;
    return html`<span class="cell ${on ? 'on' : ''}">${this.icon(key)}</span>`;
  }

  private items(list: unknown[]) {
    return list.map((it) => {
      if (typeof it === 'number') return html`<span class="sp" style="width:${it}px"></span>`;
      if (it === '|') return html`<span class="div"></span>`;
      if (it === ':') return html`<span class="grip"></span>`;
      if (it === 'v') return html`<span class="drop"></span>`;
      return this.cell(it as string);
    });
  }

  private leftTools() {
    return html`<div class="ltool">
      <div class="lgrip"></div>
      ${LEFT.map(
        (group, i) => html`${i ? html`<div class="lsep"></div>` : ''}
          <div class="lgroup">${group.map((n) => this.cell(n))}</div>`,
      )}
    </div>`;
  }

  private scene() {
    return html`<svg class="scene" viewBox="74 198 1560 813" preserveAspectRatio="none">
      <polygon points=${DISC} fill="#5e686f" stroke="#0c0c0c" stroke-width="2.500"></polygon>
      <line x1="715" y1="637" x2="73" y2="810" stroke="#1f8a1f" stroke-width="1" stroke-dasharray="1 3"></line>
      <line x1="715" y1="637" x2="73" y2="512" stroke="#a0203a" stroke-width="1" stroke-dasharray="1 3"></line>
      <line x1="715" y1="637" x2="724" y2="1011" stroke="#1a1aa0" stroke-width="1" stroke-dasharray="1 3"></line>
      <line x1="715" y1="637" x2="705" y2="196" stroke="#1414a8" stroke-width="1.300"></line>
      <line x1="715" y1="637" x2="1634" y2="388" stroke="#12920f" stroke-width="1.100"></line>
      <line x1="715" y1="637" x2="817" y2="610" stroke="#1d8a2a" stroke-width="2"></line>
      <line x1="715" y1="637" x2="1634" y2="813" stroke="#b00c28" stroke-width="1.100"></line>
    </svg>`;
  }

  private taskbar() {
    return html`<div class="taskbar">
      <span class="task">
        <svg viewBox="0 0 24 24"><path d="M3 5.500 10.500 4.500V11.500H3zM11.500 4.300 21 3V11.500H11.500zM3 12.500H10.500V19.500L3 18.500zM11.500 12.500H21V21L11.500 19.700z" fill="#000" /></svg>
      </span>
      <span class="task">
        <svg viewBox="0 0 24 24"><circle cx="14" cy="10" r="6.500" fill="none" stroke="#111" stroke-width="1.500" /><path d="M9.500 15 4 21" stroke="#111" stroke-width="2" /></svg>
      </span>
      <span class="task">
        <svg viewBox="0 0 24 24"><circle cx="12" cy="12" r="6.500" fill="none" stroke="#000" stroke-width="2.500" /></svg>
      </span>
      <span class="sp" style="width:3px"></span>
      <span class="task app">
        <svg viewBox="0 0 24 24"><circle cx="12" cy="12" r="10" fill="#5fc24a" stroke="#b8e6b0" /><path d="M6 11H18C18 6 7 5 6 12 6 19 15 19 18 15H14C11 17 9 15 9 13H18" fill="#fff" /></svg>
      </span>
      <span class="task app">
        <svg viewBox="0 0 24 24">
          <circle cx="12" cy="12" r="11" fill="#e6483a" />
          <path d="M12 12 22 7A11 11 0 0 1 12 23z" fill="#f6c62c" />
          <path d="M12 12 12 23A11 11 0 0 1 2 7z" fill="#3aa655" />
          <circle cx="12" cy="12" r="5.500" fill="#fff" />
          <circle cx="12" cy="12" r="4" fill="#4a8cf0" />
        </svg>
      </span>
      <span class="task app">
        <svg viewBox="0 0 24 24">
          <path d="M0 1H24V17H0z" fill="#4fb2f0" />
          <path d="M0 15H24V19H0z" fill="#7cc04a" />
          <path d="M0 19H24V23H0z" fill="#f0b028" />
          <path d="M10 0H16V24H10z" fill="#8a5a20" />
          <path d="M10.500 14H15.500V18H10.500z" fill="#f6dc60" />
        </svg>
      </span>
      <span class="task app cur">
        <svg viewBox="0 0 24 24">
          <path d="M3 6 17 1 22 8 20 20 7 23 4 15z" fill="#e0242c" />
          <path d="M9 9H16M9 9V13H15V17H10" fill="none" stroke="#fff" stroke-width="1.800" />
        </svg>
      </span>
      <div class="tasktray">
        <svg width="24" height="16" viewBox="0 0 24 16"><path d="M6 11 12 5 18 11" fill="none" stroke="#111" stroke-width="1.200" /></svg>
        <span class="trayime">中</span>
        <span class="ts">S</span>
        <div class="clock">16:39<br />2021/5/20</div>
        <div class="note">
          <svg viewBox="0 0 18 16"><path d="M0 0H18V12H8L4 16V12H0z" fill="#000" /><path d="M3 3H15M3 6H15M3 9H11" stroke="#fff" /></svg>
          <span>4</span>
        </div>
        <div class="task-end"></div>
      </div>
    </div>`;
  }

  render() {
    return html`
      <div class="title">
        <svg class="logo" viewBox="0 0 24 24"><path d="M3 6 17 1 22 8 20 20 7 23 4 15z" fill="#e0242c" /><path d="M9 9H16M9 9V13H15V17H10" fill="none" stroke="#fff" stroke-width="2" /></svg>
        <span>无标题 - SketchUp Pro 2020</span>
        <div class="winbtns">
          <svg viewBox="0 0 45 20"><path d="M17 10H27" stroke="#111" /></svg>
          <svg viewBox="0 0 45 20"><path d="M17.500 7.500H25.500V15.500H17.500zM20 7V5H28V13H26" fill="none" stroke="#111" /></svg>
          <svg viewBox="0 0 45 20"><path d="M18 5 28 15M28 5 18 15" stroke="#111" /></svg>
        </div>
      </div>
      <div class="menu">${MENUS.map((m) => html`<span>${m}</span>`)}</div>
      <div class="row first"><div class="section">${this.items(ROW1)}</div></div>
      <div class="row"><div class="section">${this.items(ROW2)}</div></div>
      <div class="row">
        <div class="section">${this.items(ROW3A)}</div>
        <span class="sp" style="width:40px"></span>
        <div class="section">${this.items(ROW3B)}</div>
        <span class="sp" style="width:805px"></span>
        <div class="section">${this.items(ROW3C)}</div>
      </div>
      <div class="row last"><div class="section">${this.items(ROW4)}</div></div>
      <div class="main">
        ${this.leftTools()}
        <div class="canvas">
          <div class="sky"></div>
          <div class="ground"></div>
          ${this.scene()}
        </div>
        <div class="panel">
          <div class="strip"></div>
          <div class="tray">
            <div class="tray-head">
              baidujingyan
              <svg viewBox="0 0 10 12"><path d="M3 1H7V6H3zM1 7H9M5 7V12" fill="none" stroke="#111" stroke-width="1.300" /></svg>
              <span class="tray-x">x</span>
            </div>
            ${TRAYS.map((t) => html`<div class="tray-row"><span>${t}</span><b>x</b></div>`)}
          </div>
        </div>
      </div>
      <div class="status">
        <svg style="margin-left:5px" viewBox="0 0 16 16"><circle cx="8" cy="8" r="6.500" fill="none" stroke="#aaa" stroke-width="1.300" /><path d="M6 5H10L9 11H7z" fill="#aaa" /></svg>
        <svg style="margin-left:14px" viewBox="0 0 16 16"><circle cx="8" cy="8" r="6.500" fill="none" stroke="#111" stroke-width="1.300" /><circle cx="8" cy="5" r="1.300" /><path d="M7 7.500H9V12.500H7z" /></svg>
        <span class="bar"></span>
        <span class="status-text">选择对象。 切换到扩充选择。 拖动鼠标选择多项。</span>
        <div class="status-end"><div class="status-box"></div></div>
      </div>
      ${this.taskbar()}
      <svg class="arrow" viewBox="0 0 1920 1080">
        <polygon points="30,440.500 1092,573.200 1092,575 30,449.500" fill="#ee2029"></polygon>
        <polygon points="17,444 36,438 33,455" fill="#ee2029"></polygon>
      </svg>
      <div class="ime-logo">S</div>
      <div class="ime">
        <span>中</span>
        <span>°,</span>
        <svg viewBox="0 0 16 16"><circle cx="8" cy="8" r="7" fill="none" stroke="currentColor" stroke-width="1.300" /><circle cx="5.500" cy="6.500" r="1" fill="currentColor" /><circle cx="10.500" cy="6.500" r="1" fill="currentColor" /><path d="M4.500 10Q8 13 11.500 10" fill="none" stroke="currentColor" /></svg>
        <svg viewBox="0 0 16 16"><path d="M6 1H10V9H6z" fill="currentColor" /><path d="M3.500 7Q4 12 8 12T12.500 7M8 12V15M5 15.500H11" fill="none" stroke="currentColor" stroke-width="1.300" /></svg>
        <svg viewBox="0 0 16 16"><path d="M0.500 3H15.500V13H0.500z" fill="none" stroke="currentColor" stroke-width="1.300" /><path d="M2.500 5.500H13.500M2.500 8H13.500M4 10.500H12" stroke="currentColor" stroke-dasharray="1.500 1" /></svg>
        <svg viewBox="0 0 16 16"><circle cx="6" cy="4" r="3" fill="#9fb4c8" /><path d="M1 14C1 9 11 9 11 14z" fill="#9fb4c8" /><path d="M10 10H16V15H10z" fill="#fff" stroke="#9fb4c8" /></svg>
        <svg viewBox="0 0 16 16"><path d="M5 1 8 2.500 11 1 15 4 13 7 12 6V15H4V6L3 7 1 4z" fill="currentColor" /></svg>
        <svg viewBox="0 0 16 16"><path d="M1 2H7V7H1zM9 2H15V7H9zM1 9H7V14H1zM9 9H15V14H9z" fill="currentColor" /></svg>
      </div>
      <div class="ear" style="left:1618px"></div>
      <div class="ear" style="left:1648px;top:878px"></div>
      <div class="mark">
        <svg viewBox="0 0 65 67">
          <path d="M14 62C5 58 3 52 3 45V16C3 6 10 2 18 5L55 25C64 30 64 38 55 43L25 63C20 66 16 64 14 58" fill="none" stroke="#c0c0c4" stroke-width="6" stroke-linecap="round" stroke-linejoin="round" />
          <path d="M14 8V50" fill="none" stroke="#c0c0c4" stroke-width="5" stroke-linecap="round" />
          <path d="M25 24 39 32 25 41z" fill="#c0c0c4" />
          <path d="M43 25V39" stroke="#c0c0c4" stroke-width="2.500" />
        </svg>
        <div class="mark-text">
          <div class="mark-cn">溜溜自学</div>
          <div class="mark-en">ZIXUE.3D66.COM</div>
        </div>
      </div>
    `;
  }
}
